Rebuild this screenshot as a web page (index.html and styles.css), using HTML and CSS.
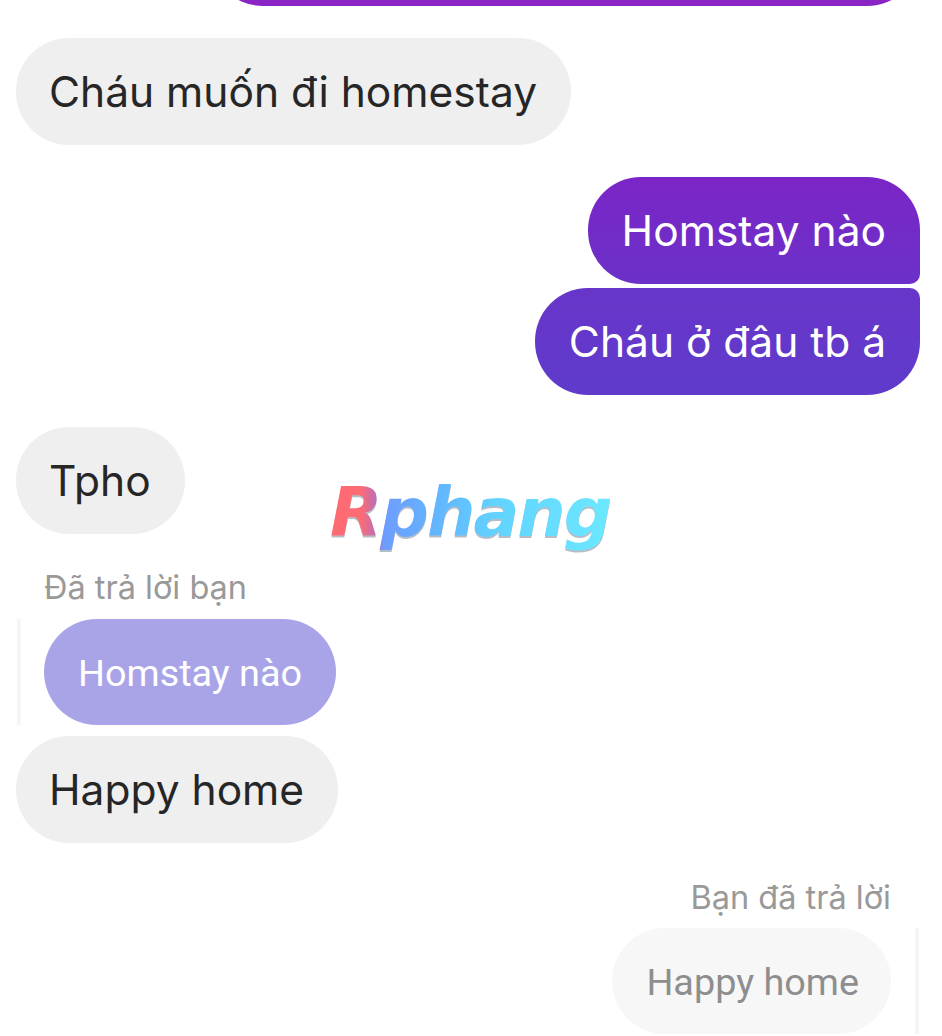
FILE: index.html
```html
<!DOCTYPE html>
<html lang="vi">
<head>
  <meta charset="UTF-8" />
  <meta name="viewport" content="width=device-width, initial-scale=1" />
  <title>Tin nhắn</title>
  <link rel="stylesheet" href="styles.css">
</head>
<body>
  <div class="chat">
    <div class="row row-me">
      <div class="bubble bubble-top"></div>
    </div>

    <div class="row group-gap">
      <div class="bubble bubble-them">Cháu muốn đi homestay</div>
    </div>

    <div class="row row-me group-gap">
      <div class="bubble bubble-me me-first">Homstay nào</div>
    </div>
    <div class="row row-me small-gap">
      <div class="bubble bubble-me me-last">Cháu ở đâu tb á</div>
    </div>

    <div class="row group-gap">
      <div class="bubble bubble-them">Tpho</div>
    </div>

    <div class="reply-label">Đã trả lời bạn</div>
    <div class="reply reply-left">
      <span class="reply-bar"></span>
      <div class="bubble reply-purple">Homstay nào</div>
    </div>
    <div class="row reply-after">
      <div class="bubble bubble-them">Happy home</div>
    </div>

    <div class="reply-label label-right">Bạn đã trả lời</div>
    <div class="reply reply-right">
      <div class="bubble reply-grey">Happy home</div>
      <span class="reply-bar"></span>
    </div>
  </div>

  <div class="watermark">Rphang</div>
</body>
</html>
```

FILE: styles.css
```css
html, body {
  margin: 0;
  height: 100%;
  background: #fff;
  overflow: hidden;
}

.chat {
  display: flex;
  flex-direction: column;
  height: 1036px;
  padding: 0 22px 0 16px;
  box-sizing: border-box;
  overflow: hidden;
  font-family: "Inter", "Noto Sans", sans-serif;
}

.row {
  display: flex;
  flex: none;
}

.row-me {
  justify-content: flex-end;
}

.group-gap {
  margin-top: 32px;
}

.small-gap {
  margin-top: 4px;
}

.bubble {
  box-sizing: border-box;
  height: 107px;
  padding: 0 34px;
  border-radius: 53px;
  display: flex;
  align-items: center;
  font-size: 42.5px;
  white-space: nowrap;
}

.bubble-top {
  width: 710px;
  margin-top: -101px;
  background: #8a24c4;
}

.bubble-them {
  padding: 0 34px 0 33px;
  background: #efefef;
  color: #262626;
}

.bubble-me {
  color: #fff;
}

.me-first {
  background: linear-gradient(#7b25c7, #6b31c8);
  border-bottom-right-radius: 10px;
}

.me-last {
  background: linear-gradient(#6835c9, #5f3bcb);
  border-top-right-radius: 10px;
}

.reply-label {
  flex: none;
  margin: 29px 0 0 28px;
  height: 49px;
  font-size: 32.5px;
  line-height: 49px;
  color: #999;
}

.label-right {
  align-self: flex-end;
  margin: 30px 29px 0 0;
}

.reply {
  display: flex;
  flex: none;
  align-items: stretch;
  margin-top: 7px;
}

.reply-left {
  gap: 23px;
  margin-left: 1px;
}

.reply-right {
  justify-content: flex-end;
  gap: 24px;
  margin: 6px 1px 0 0;
}

.reply-bar {
  width: 4px;
  background: #f6f6f6;
}

.reply-purple,
.reply-grey {
  height: 106px;
  padding-top: 2px;
  font-family: "Roboto", sans-serif;
  font-size: 37.8px;
}

.reply-purple {
  background: #a9a4e8;
  color: #fff;
}

.reply-grey {
  padding-right: 32px;
  background: #f7f7f7;
  color: #8e8e8e;
}

.reply-after {
  margin-top: 11px;
}

/* watermark sits over the chat */
.watermark {
  position: absolute;
  left: 330px;
  top: 468px;
  font-family: "DejaVu Sans", sans-serif;
  font-size: 68px;
  font-weight: bold;
  font-style: italic;
  line-height: 90px;
  letter-spacing: -2px;
  background: linear-gradient(90deg, #ff6b72 0%, #ff6b72 11%, #b56fc0 17%, #6e9cff 19%, #62b8ff 40%, #62d4ff 60%, #6ce8ff 100%);
  -webkit-background-clip: text;
  background-clip: text;
  color: transparent;
  filter: drop-shadow(0 2px 0 rgba(90, 110, 130, 0.45));
}
```
